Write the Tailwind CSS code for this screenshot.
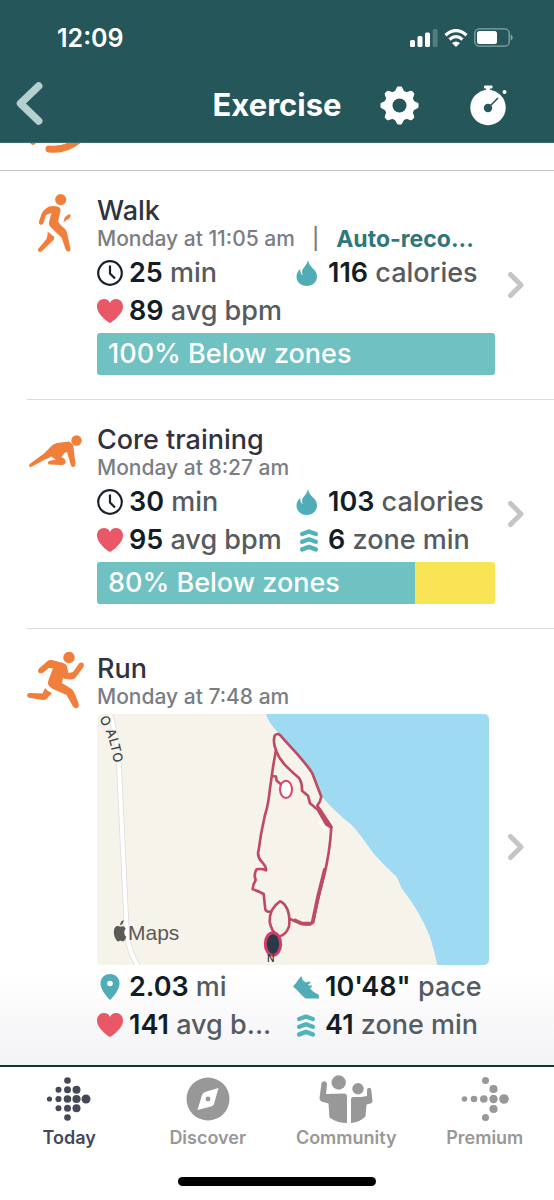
<!DOCTYPE html>
<html lang="en">
<head>
<meta charset="utf-8">
<meta name="viewport" content="width=device-width, initial-scale=1">
<title>Exercise</title>
<script src="https://cdn.jsdelivr.net/npm/@tailwindcss/browser@4"></script>
</head>
<body class="flex min-h-screen flex-col bg-white font-['Inter','Liberation_Sans',sans-serif] text-[#2f3241]">

<!-- shared icon shapes -->
<svg class="hidden" aria-hidden="true">
  <symbol id="clock" viewBox="0 0 26 26"><circle cx="13" cy="13" r="11.8" fill="none" stroke="currentColor" stroke-width="2.2"/><path d="M13 5.5V13.5L18 18.5" fill="none" stroke="currentColor" stroke-width="2.2"/></symbol>
  <symbol id="heart" viewBox="0 0 26 24"><path d="M13 24C11.500 23.500 0 15.500 0 7.500C0 3 3 0 7 0C9.800 0 12 1.500 13 4C14 1.500 16.200 0 19 0C23 0 26 3 26 7.500C26 15.500 14.500 23.500 13 24Z" fill="currentColor"/></symbol>
  <symbol id="flame" viewBox="0 0 21 26"><path d="M11.500 0C12 4 14.500 6.500 17.500 9.500C19.700 11.700 20.500 14 20.500 16.500C20.500 22 16 26 10.300 26C4.500 26 0 22 0 16.500C0 13.500 1.500 11 3.700 9C3.700 12 4.500 14.300 6.300 15.300C5.100 12 5.300 10 7.500 7.500C9.700 4.900 10.900 2.500 11.500 0Z" fill="currentColor"/></symbol>
  <symbol id="zones" viewBox="0 0 18 23"><path d="M2.200 5L9 2.500L15.800 5M2.200 12.700L9 10.200L15.800 12.700M2.200 20.400L9 17.900L15.800 20.400" fill="none" stroke="currentColor" stroke-width="4.400" stroke-linecap="round" stroke-linejoin="round"/></symbol>
  <symbol id="pin" viewBox="0 0 19 26"><path d="M9.500 26C8 24.500 0 16.500 0 9.500C0 4 4 0 9.500 0S19 4 19 9.500C19 16.500 11 24.500 9.500 26Z" fill="currentColor"/><circle cx="9.500" cy="9.500" r="2.800" fill="#fff"/></symbol>
  <symbol id="shoe" viewBox="0 0 26 23"><path d="M0 10.500L3 7L5 4L8 0.500Q9 0 9 1.500L9.500 4L13 6.500L14 6L17 5.500L17.500 7.200L15 8.200L16 9.800L18.500 9.200L19 11L17 12L18.500 14Q21 16.800 24.500 18Q26.500 19 26 22.500H12.500L8 18.500L4.500 14.500Z" fill="currentColor"/></symbol>
  <symbol id="chevron" viewBox="0 0 18 28"><path d="M3.500 3.500L14 14L3.500 24.500" fill="none" stroke="currentColor" stroke-width="5" stroke-linecap="round" stroke-linejoin="round"/></symbol>
</svg>

<header class="border-b border-[#3d6f72] bg-[#25565a] text-white">
  <div class="flex h-[75px] items-center justify-between pr-[41px] pl-[57px]">
    <time class="text-[25px] leading-[30px] font-semibold">12:09</time>
    <div class="flex items-center gap-[6px]">
      <svg class="h-[18px] w-[28px]" viewBox="0 0 28 18" fill="currentColor" aria-label="Signal"><rect y="11" width="5" height="7" rx="1.500"/><rect x="7.500" y="7" width="5" height="11" rx="1.500"/><rect x="15" y="3.500" width="5" height="14.500" rx="1.500"/><rect x="22.700" width="5" height="18" rx="1.500" opacity=".22"/></svg>
      <svg class="h-[18px] w-[24px]" viewBox="0 0 24 18" aria-label="Wi-Fi"><path d="M1.500 6.200Q12-3 22.500 6.200" fill="none" stroke="currentColor" stroke-width="3.200"/><path d="M5.500 10.500Q12 4.800 18.500 10.500" fill="none" stroke="currentColor" stroke-width="3.200"/><path d="M8 14Q12 11 16 14L12 18Z" fill="currentColor"/></svg>
      <svg class="h-[19px] w-[39px]" viewBox="0 0 39 19" aria-label="Battery"><rect x=".8" y=".8" width="34.400" height="17.400" rx="4.500" fill="none" stroke="#84a7a8" stroke-width="1.300"/><rect x="3" y="3" width="20" height="13" rx="2.500" fill="currentColor"/><path d="M36.700 6.500Q38.700 7.500 38.700 9.500T36.700 12.500Z" fill="#84a7a8"/></svg>
    </div>
  </div>
  <div class="grid h-[67px] grid-cols-[1fr_auto_1fr] items-start">
    <button type="button" aria-label="Back" class="ml-[16px] mt-[7px] w-[27px] text-[#b6cfd0]"><svg class="h-[43px] w-[27px]" viewBox="0 0 27 43"><path d="M22.700 4L4.500 21.500L22.700 39" fill="none" stroke="currentColor" stroke-width="7.500" stroke-linecap="round" stroke-linejoin="round"/></svg></button>
    <h1 class="mt-[11px] text-[31px] leading-[38px] font-bold">Exercise</h1>
    <div class="mt-[10px] flex items-center justify-between pr-[46px] pl-[38px]">
      <button type="button" aria-label="Settings"><svg class="h-[39px] w-[39px]" viewBox="-20 -20 40 40"><g fill="currentColor"><circle r="15.500"/><g id="teeth"><path id="tooth" d="M-5-14L-3-18Q-2.500-19.500-1.500-19.500H1.500Q2.500-19.500 3-18L5-14V14L3 18Q2.500 19.500 1.500 19.500H-1.500Q-2.500 19.500-3 18L-5 14Z"/><use href="#tooth" transform="rotate(90)"/></g><use href="#teeth" transform="rotate(45)"/></g><circle r="7.200" fill="#25565a"/></svg></button>
      <button type="button" aria-label="Start timer"><svg class="h-[41px] w-[38px]" viewBox="0 0 38 41"><g fill="currentColor"><circle cx="18" cy="22.500" r="17.700"/><rect x="14" y=".5" width="8.500" height="3" rx="1"/><rect x="16" y="2" width="4" height="4"/><circle cx="34.500" cy="7" r="2"/></g><circle cx="18" cy="23" r="4.200" fill="#25565a"/><path d="M18 23L28 13" stroke="#25565a" stroke-width="1.600"/></svg></button>
    </div>
  </div>
</header>

<main class="flex-1 bg-linear-to-b from-white from-90% to-[#f3f3f6]">
  <ul>
    <li class="h-7 border-b border-[#c8c8ca] pl-[26px]">
      <svg class="h-[12px] w-[58px] text-[#f07f3c]" viewBox="0 0 58 12"><path d="M4 0Q7 4 10 0Z" fill="currentColor"/><path d="M23 6Q40 8 54-4" fill="none" stroke="currentColor" stroke-width="7" stroke-linecap="round"/></svg>
    </li>

    <li class="ml-[27px] border-b border-[#dadadc]">
      <a href="#walk" class="flex items-start pt-[25px] pr-[29px] pb-6">
        <svg class="-mt-[2px] h-[58px] w-[58px] shrink-0 text-[#f07f3c]" viewBox="1 0 58 58" fill="currentColor"><circle cx="34.700" cy="5.600" r="5.600"/><path d="M20 14.500Q24 11 31 12.500Q36 13.500 34 19L32 27.500Q34 31 38 34Q40 35.500 41 38.500L44.500 55Q44.500 58 42 57.500Q40.500 57.500 39.500 55L35.500 43.500L24.500 33Q22 30 23.500 26L25.500 19L20 21L17.500 29Q16.500 31.500 14 30.500Q12.500 29.500 13 27.500L15.500 20Q17 16.500 20 14.500Z"/><path d="M37.500 28.500L38.500 24Q40 21.500 43.500 20Q45 20 44.500 22.500Q43.500 25 40.500 26Z"/><path d="M21.500 37.500L28.500 43L27.500 46L15.500 57.500Q13.500 58.500 12.200 57Q11.500 55.500 12.500 54.500L20.500 45Q22 41.500 21.500 37.500Z"/></svg>
        <div class="ml-3 min-w-0 flex-1">
          <h2 class="text-[27px] leading-[30px] font-medium">Walk</h2>
          <p class="flex text-[21px] leading-[26px] font-medium whitespace-nowrap text-[#7b7d84]"><span>Monday at 11:05 am</span><span class="px-[17px]">|</span><strong class="text-[23px] font-bold text-[#307779]">Auto-reco...</strong></p>
          <div class="mt-[2px] grid grid-cols-2 text-[27px] leading-[38px] font-medium whitespace-nowrap text-[#565b60]">
            <p class="flex items-center gap-[6px]"><svg class="h-[26px] w-[26px] text-[#17212b]"><use href="#clock"/></svg><span><b class="font-semibold text-[#121d26]">25</b> min</span></p>
            <p class="flex items-center gap-[6px]"><svg class="h-[26px] w-[26px] pr-1 text-[#50adb8]"><use href="#flame"/></svg><span><b class="font-semibold text-[#121d26]">116</b> calories</span></p>
            <p class="flex items-center gap-[6px]"><svg class="h-[24px] w-[26px] text-[#e95866]"><use href="#heart"/></svg><span><b class="font-semibold text-[#121d26]">89</b> avg bpm</span></p>
          </div>
          <div class="mt-[3px] flex h-[42px] overflow-hidden rounded-[3px] bg-[#70c1c2]"><span class="pl-[11px] text-[27px] leading-[42px] font-medium whitespace-nowrap text-white">100% Below zones</span></div>
        </div>
        <svg class="mt-[75px] ml-3 h-[28px] w-[18px] shrink-0 text-[#c5c5c7]"><use href="#chevron"/></svg>
      </a>
    </li>

    <li class="ml-[27px] border-b border-[#dadadc]">
      <a href="#core-training" class="flex items-start pt-[25px] pr-[29px] pb-6">
        <svg class="mt-[10px] h-[34px] w-[58px] shrink-0 text-[#f07f3c]" viewBox="0 0 58 34" fill="currentColor"><circle cx="49.500" cy="5.500" r="5.200"/><path d="M24.500 11Q26 9 30 8L42 6.500Q46 8 46.500 12L48.500 29Q48 32.500 45.500 32Q44 31.500 43.500 29L40 17L37.500 18L34.500 22Q39.500 24 38.500 28Q37 30.500 34 30L23 29.500Q20.500 29 21 27Q22 25.500 24 25.500L29 24.500L24 21.500Q21.500 23.500 18 24.500L5 31.500Q2.500 32.500 2 31Q2 29 4 28L17 18.500Z"/></svg>
        <div class="ml-3 min-w-0 flex-1">
          <h2 class="text-[27px] leading-[30px] font-medium">Core training</h2>
          <p class="text-[21px] leading-[26px] font-medium text-[#7b7d84]">Monday at 8:27 am</p>
          <div class="mt-[2px] grid grid-cols-2 text-[27px] leading-[38px] font-medium whitespace-nowrap text-[#565b60]">
            <p class="flex items-center gap-[6px]"><svg class="h-[26px] w-[26px] text-[#17212b]"><use href="#clock"/></svg><span><b class="font-semibold text-[#121d26]">30</b> min</span></p>
            <p class="flex items-center gap-[6px]"><svg class="h-[26px] w-[26px] pr-1 text-[#50adb8]"><use href="#flame"/></svg><span><b class="font-semibold text-[#121d26]">103</b> calories</span></p>
            <p class="flex items-center gap-[6px]"><svg class="h-[24px] w-[26px] text-[#e95866]"><use href="#heart"/></svg><span><b class="font-semibold text-[#121d26]">95</b> avg bpm</span></p>
            <p class="flex items-center gap-[6px]"><svg class="h-[23px] w-[26px] text-[#50b3bb]"><use href="#zones"/></svg><span><b class="font-semibold text-[#121d26]">6</b> zone min</span></p>
          </div>
          <div class="mt-[3px] flex h-[42px] overflow-hidden rounded-[3px] bg-[#f8e454]"><span class="w-4/5 bg-[#70c1c2] pl-[11px] text-[27px] leading-[42px] font-medium whitespace-nowrap text-white">80% Below zones</span></div>
        </div>
        <svg class="mt-[75px] ml-3 h-[28px] w-[18px] shrink-0 text-[#c5c5c7]"><use href="#chevron"/></svg>
      </a>
    </li>

    <li class="ml-[27px]">
      <a href="#run" class="flex items-start pt-[25px] pr-[29px] pb-5">
        <svg class="-mt-[2px] h-[57px] w-[58px] shrink-0 text-[#f07f3c]" viewBox="0 0 58 57" fill="currentColor"><circle cx="42" cy="5.500" r="5.700"/><path d="M20.500 9Q22 7.500 25 8L36 11Q40 12.500 40 15L41.500 21L46 20L52 11.500Q54.500 9.500 56.500 11.500Q57.500 13.500 56 15.500L49 25Q47 27.500 44 27.500L38 27L36 25.500L35 31L43 36Q46 37.500 47 40L51.500 51Q52.500 54 50.500 56Q48 57 46 54.500L39.500 43L25 36.500Q19.500 33.500 21.500 28L26 16.500L22 16L15.500 21Q12.500 22 11.200 20Q10.500 18 12 16.500Z"/><path d="M18 36Q20.500 39.500 25 41L19.500 47Q18 48 16 48L3.500 46Q0 45.500 0 43Q.5 40.500 4 41L15.500 41.500Z"/></svg>
        <div class="mr-[6px] ml-3 min-w-0 flex-1">
          <h2 class="text-[27px] leading-[30px] font-medium">Run</h2>
          <p class="text-[21px] leading-[26px] font-medium text-[#7b7d84]">Monday at 7:48 am</p>
          <svg class="mt-1 w-full rounded-[5px] bg-[#f6f3eb]" viewBox="0 0 392 251" role="img" aria-label="Route map">
            <g transform="translate(133 -4) scale(.3333)">
              <path d="M108 12Q116 40 145 68L200 135L245 190L278 262Q310 302 365 345Q385 365 430 430Q460 465 500 500L515 535Q570 605 600 680Q612 718 622 765H780V10Z" fill="#9fdaf3"/>
              <path d="M268 335L290 359" stroke="#fff" stroke-width="9"/>
              <g fill="none" stroke="#bf4a63" stroke-width="8" stroke-linejoin="round" stroke-linecap="round">
                <path d="M120 605Q105 607 105 590L101 552Q85 543 68 538Q68 525 77 510Q70 490 80 478Q95 475 108 481Q110 472 95 455Q80 440 86 420Q92 370 105 315Q115 285 120 235L130 165L138 120Q128 98 134 77Q145 65 156 82L200 130Q235 170 247 190Q260 225 274 260Q272 275 262 286L272 305L304 350Q300 430 280 505Q260 580 250 635Q240 650 205 638L180 627"/>
                <path d="M138 122Q148 148 170 170Q190 190 208 205Q217 220 216 242L234 257L240 280L264 300L289 344L304 352"/>
                <path d="M128 198L138 200L140 212L152 222"/>
                <path d="M150 574Q163 578 173 600Q181 625 177 650Q168 675 147 680Q125 668 119 635Q118 595 150 574Z"/>
              </g>
              <path d="M268 298L301 349M284 480L264 560L248 636M195 631L215 640L242 641" fill="none" stroke="#bf4a63" stroke-width="11" stroke-linecap="round"/>
              <ellipse cx="168" cy="238" rx="18" ry="26" fill="#fff" stroke="#d9436e" stroke-width="6"/>
              <ellipse cx="129" cy="702" rx="23" ry="34" fill="#2b3a48" stroke="#cf3d68" stroke-width="9"/>
            </g>
            <path d="M13 0Q20 22 22 52L30 222Q32 237 41 252" fill="none" stroke="#dcdade" stroke-width="5.500"/>
            <path d="M13 0Q20 22 22 52L30 222Q32 237 41 252" fill="none" stroke="#fff" stroke-width="4"/>
            <path id="road" d="M2 5Q15 24 18 60" fill="none"/>
            <text class="text-[13px] font-medium" fill="#414249" stroke="#f6f3eb" stroke-width="3" paint-order="stroke"><textPath href="#road">O ALTO</textPath></text>
            <text x="170" y="248" class="text-[10px] font-medium" fill="#33353c">N</text>
            <path d="M23.500 212.800C21.500 211.600 19.500 211.600 18 213.500C16.500 215.500 16.500 220 18 223.500C19 226 20.500 228 22 227.300C23.200 226.700 24 226.700 25.200 227.300C26.800 228 28.500 225.500 29.300 222.700C26.700 221.300 26.500 216.500 28.800 214.800C27.500 212 25.500 211.700 23.500 212.800ZM23.200 211.500C23 208.500 24.500 206.500 26.500 206C26.800 208.700 25.300 211 23.200 211.500Z" fill="#5c5a57"/>
            <text x="31" y="226" class="font-['Liberation_Sans_Narrow','Liberation_Sans',sans-serif] text-[21px]" fill="#5c5a57">Maps</text>
          </svg>
          <div class="mt-[3px] grid grid-cols-2 text-[27px] leading-[38px] font-medium whitespace-nowrap text-[#565b60]">
            <p class="flex items-center gap-[6px]"><svg class="h-[26px] w-[26px] text-[#50adb8]"><use href="#pin"/></svg><span><b class="font-semibold text-[#121d26]">2.03</b> mi</span></p>
            <p class="flex items-center gap-[6px]"><svg class="h-[23px] w-[26px] text-[#50adb8]"><use href="#shoe"/></svg><span><b class="font-semibold text-[#121d26]">10'48"</b> pace</span></p>
            <p class="flex items-center gap-[6px]"><svg class="h-[24px] w-[26px] text-[#e95866]"><use href="#heart"/></svg><span><b class="font-semibold text-[#121d26]">141</b> avg b...</span></p>
            <p class="flex items-center gap-[6px]"><svg class="h-[23px] w-[26px] text-[#50b3bb]"><use href="#zones"/></svg><span><b class="font-semibold text-[#121d26]">41</b> zone min</span></p>
          </div>
        </div>
        <svg class="mt-[179px] ml-3 h-[28px] w-[18px] shrink-0 text-[#c5c5c7]"><use href="#chevron"/></svg>
      </a>
    </li>
  </ul>
</main>

<footer class="border-t-2 border-[#12332f] bg-white pb-[14px]">
  <nav class="grid h-[110px] grid-cols-4 pt-[8px] text-center text-[18px] leading-[24px] font-semibold text-[#989898]">
    <a href="#today" aria-current="page" class="flex flex-col items-center gap-[3px] text-[#454857]">
      <svg class="h-[48px] w-[46px]" viewBox="1 0 46 48" fill="currentColor"><circle cx="22.500" cy="5.500" r="3.300"/><circle cx="22.500" cy="42.500" r="3.300"/><circle cx="13.500" cy="14.700" r="3"/><circle cx="22.500" cy="14.700" r="3.500"/><circle cx="31.500" cy="14.700" r="4"/><circle cx="4.500" cy="24" r="2.600"/><circle cx="13.500" cy="24" r="3.100"/><circle cx="22.500" cy="24" r="3.800"/><circle cx="31.500" cy="24" r="4.100"/><circle cx="41" cy="24" r="4.500"/><circle cx="13.500" cy="33.300" r="3"/><circle cx="22.500" cy="33.300" r="3.500"/><circle cx="31.500" cy="33.300" r="4"/></svg>
      <span>Today</span>
    </a>
    <a href="#discover" class="flex flex-col items-center gap-[3px]">
      <svg class="h-[48px] w-[46px]" viewBox="0 0 46 48"><circle cx="23" cy="24" r="21.500" fill="currentColor"/><path d="M33.500 13L29 29Q28 31 26 31.500L12.500 35L17 20Q18 18 20 17Z" fill="#fff"/><circle cx="23" cy="24" r="2.400" fill="currentColor"/></svg>
      <span>Discover</span>
    </a>
    <a href="#community" class="flex flex-col items-center gap-[3px]">
      <svg class="h-[48px] w-[54px]" viewBox="0 0 54 48" fill="currentColor"><circle cx="19.700" cy="7.500" r="7.200"/><circle cx="39" cy="13.800" r="5.700"/><path d="M2.500 8Q4 5.500 6.500 6.500Q8.500 7.500 8 10L7 19L25 18.500Q28 18.500 28 21.500V48Q18 48 10.500 42.500L9.500 28.500L2.500 26.500Q.5 26 .5 23Z"/><path d="M32 48V24Q32 22 34.500 22H42L48 21V15Q48 13 50 12.700Q52 12.700 52.300 15L53.500 26Q53.500 28 51.500 28.500L47.500 29.500L46.500 41.500Q41 47 32 48Z"/></svg>
      <span>Community</span>
    </a>
    <a href="#premium" class="flex flex-col items-center gap-[3px]">
      <svg class="h-[48px] w-[50px]" viewBox="0 0 50 48" fill="currentColor"><circle cx="25.500" cy="5.500" r="3.500"/><circle cx="33.500" cy="14" r="4.100"/><circle cx="4.500" cy="24" r="2.800"/><circle cx="14" cy="24" r="3.300"/><circle cx="23.800" cy="24" r="3.800"/><circle cx="33.500" cy="24" r="4.200"/><circle cx="44" cy="24" r="4.800"/><circle cx="33.500" cy="34" r="4.100"/><circle cx="25.500" cy="42.500" r="3.500"/></svg>
      <span>Premium</span>
    </a>
  </nav>
  <div class="mx-auto h-[9px] w-[198px] rounded-full bg-black"></div>
</footer>
</body>
</html>
